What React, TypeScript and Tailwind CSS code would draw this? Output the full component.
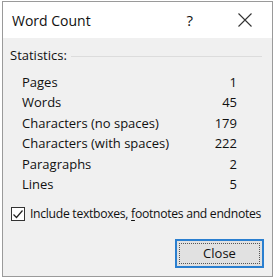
import React, { useState } from 'react';

const stats: { label: string; value: number }[] = [
  { label: 'Pages', value: 1 },
  { label: 'Words', value: 45 },
  { label: 'Characters (no spaces)', value: 179 },
  { label: 'Characters (with spaces)', value: 222 },
  { label: 'Paragraphs', value: 2 },
  { label: 'Lines', value: 5 },
];

const App: React.FC = () => {
  const [includeExtras, setIncludeExtras] = useState(true);

  return (
    <div className="w-[274px] h-[278px] bg-white text-[#111]" style={{ fontFamily: '"Open Sans", "Noto Sans", sans-serif' }}>
      <div className="w-[271px] h-[276px] ml-[2px] mt-[1px] border border-[#9a9a9a] flex flex-col bg-[#f0f0f0]">
        {/* title bar */}
        <div className="h-[36px] bg-white flex items-center pl-[9px] shrink-0">
          <span className="text-[14px]">Word Count</span>
          <span className="ml-auto text-[15px] mr-[44px]">?</span>
          <svg width="16" height="16" viewBox="0 0 16 16" className="mr-[19px]">
            <path d="M1.5 1.5 L14.5 14.5 M14.5 1.5 L1.5 14.5" stroke="#333" strokeWidth="1.1" />
          </svg>
        </div>

        <div className="flex-1 pl-[7px] pr-[4px] pt-[9px] text-[13px]">
          <div className="flex items-center gap-[4px] h-[18px]">
            <span>Statistics:</span>
            <div className="flex-1 h-px bg-[#dcdcdc] mr-[6px]" />
          </div>

          <div className="mt-[7px] pl-[12px] pr-[31px]">
            {stats.map((s) => (
              <div key={s.label} className="flex justify-between h-[20.5px] items-center">
                <span>{s.label}</span>
                <span>{s.value}</span>
              </div>
            ))}
          </div>

          <label className="flex items-center h-[16px] mt-[11px] ml-[1px] gap-[5px] cursor-pointer whitespace-nowrap">
            <button
              type="button"
              onClick={() => setIncludeExtras(!includeExtras)}
              className="w-[14px] h-[14px] shrink-0 border border-[#333] bg-white flex items-center justify-center"
            >
              {includeExtras && (
                <svg width="12" height="12" viewBox="0 0 12 12">
                  <path d="M1.5 6.5 L4.5 9.5 L10.5 2.5" fill="none" stroke="#222" strokeWidth="1.2" />
                </svg>
              )}
            </button>
            <span className="text-[12.2px] tracking-[-0.3px]">
              Include textboxes, <span className="underline underline-offset-2">f</span>ootnotes and endnotes
            </span>
          </label>

          <div className="flex justify-end mt-[17px] mr-[4px]">
            <button
              type="button"
              className="w-[89px] h-[29px] border-2 border-[#2a7fd0] bg-[#e1e1e1] p-[2px]"
            >
              <div className="w-full h-full border border-dotted border-[#555] flex items-center justify-center">
                Close
              </div>
            </button>
          </div>
        </div>
      </div>
    </div>
  );
};

export default App;
